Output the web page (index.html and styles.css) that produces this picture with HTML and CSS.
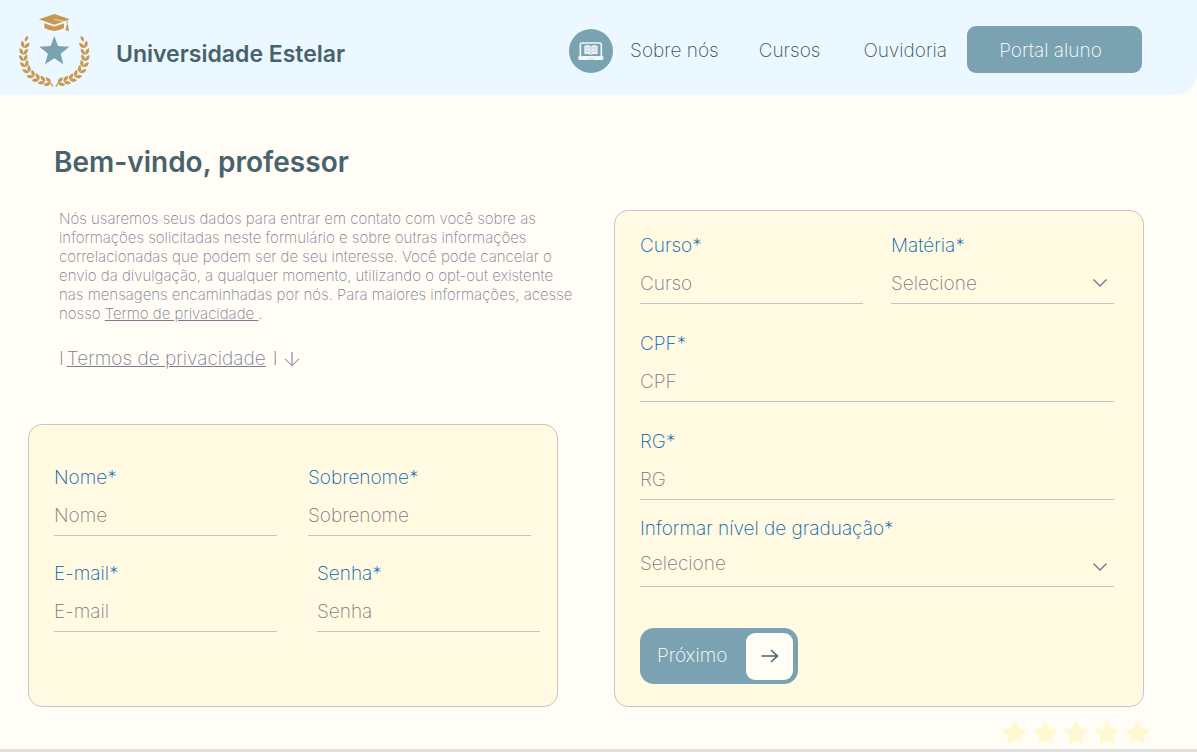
FILE: index.html
```html
<!DOCTYPE html>
<html lang="pt-BR">
<head>
<meta charset="utf-8">
<meta name="viewport" content="width=device-width, initial-scale=1">
<title>Universidade Estelar</title>
<link rel="stylesheet" href="styles.css">
</head>
<body>
<header class="header">
  <svg class="logo" viewBox="0 0 270 270" aria-hidden="true">
    <defs>
      <g id="leaves">
        <path d="M0 3C-11 2-14-7-12-16C-4-13 1-7 0 3Z"/>
        <path d="M0 3C11 2 14-7 12-16C4-13-1-7 0 3Z"/>
      </g>
      <g id="branch">
        <path d="M45 110C42 101 46 95 54 92C56 101 52 107 45 110Z"/>
        <use href="#leaves" transform="translate(43 126) rotate(14)"/>
        <use href="#leaves" transform="translate(40 146) rotate(6)"/>
        <use href="#leaves" transform="translate(41 165) rotate(-6)"/>
        <use href="#leaves" transform="translate(46 183) rotate(-18)"/>
        <use href="#leaves" transform="translate(55 200) rotate(-33)"/>
        <use href="#leaves" transform="translate(69 214) rotate(-48)"/>
        <use href="#leaves" transform="translate(85 223) rotate(-61)"/>
        <use href="#leaves" transform="translate(102 229) rotate(-70)"/>
        <use href="#leaves" transform="translate(119 233) rotate(-74)"/>
        <path d="M117 230Q127 234 130 244L126 245Q124 236 116 233Z"/>
      </g>
    </defs>
    <g fill="#c9984f">
      <use href="#branch"/>
      <use href="#branch" transform="translate(266 0) scale(-1 1)"/>
      <path d="M87 43L133 27L180 43L133 59Z"/>
      <path d="M103 54L133 64L162 54V69Q148 77 133 78Q118 77 103 69Z"/>
      <path d="M170 47H174V59L177 77H167L170 59Z"/>
    </g>
    <path d="M133 43L172 51V60M103 54L133 64L162 54" fill="none" stroke="#ebf8ff" stroke-width="2"/>
    <path fill="#7aa2b1" d="M133 93L144 123L178 125L152 146L160 178L133 160L105 178L114 146L88 125L122 123Z"/>
  </svg>
  <span class="brand">Universidade Estelar</span>
  <nav class="nav">
    <a class="about" href="#">
      <svg class="about-icon" viewBox="0 0 132 132" aria-hidden="true">
        <circle cx="66" cy="66" r="66" fill="#7aa2b1"/>
        <rect x="34" y="42" width="63" height="42" rx="5" fill="none" stroke="#eef7fa" stroke-width="5"/>
        <path d="M28 82H103V89Q103 93 98 93H33Q28 93 28 89Z" fill="#f4fafc"/>
        <path d="M56 90H75" stroke="#a8c3cd" stroke-width="2"/>
        <path d="M46 50Q57 46 66 51Q75 46 86 50V76Q75 73 66 78Q57 73 46 76Z" fill="#e3eff3"/>
        <path d="M66 51V77M51 57H61M71 57H81M51 66H61M71 66H81" stroke="#a8c3cd" stroke-width="2"/>
      </svg>
      <span>Sobre nós</span>
    </a>
    <a class="courses" href="#">Cursos</a>
    <a class="contact" href="#">Ouvidoria</a>
    <button class="portal" type="button">Portal aluno</button>
  </nav>
</header>

<main class="main">
  <section class="intro">
    <h1 class="title">Bem-vindo, professor</h1>
    <p class="text">Nós usaremos seus dados para entrar em contato com você sobre as<br>
      informações solicitadas neste formulário e sobre outras informações<br>
      correlacionadas que podem ser de seu interesse. Você pode cancelar o<br>
      envio da divulgação, a qualquer momento, utilizando o opt-out existente<br>
      nas mensagens encaminhadas por nós. Para maiores informações, acesse<br>
      nosso <a href="#">Termo de privacidade </a>.</p>
    <p class="terms"><span>I</span><a href="#">Termos de privacidade</a><span class="terms-end">I</span>
      <svg class="down" viewBox="0 0 16 16" aria-hidden="true"><path d="M8 1V14M1 8L8 14.500L15 8"/></svg>
    </p>
    <form class="card personal">
      <div class="row row-name">
        <div class="field"><label for="nome">Nome*</label><input id="nome" type="text" placeholder="Nome"></div>
        <div class="field"><label for="sobrenome">Sobrenome*</label><input id="sobrenome" type="text" placeholder="Sobrenome"></div>
      </div>
      <div class="row row-access">
        <div class="field"><label for="email">E-mail*</label><input id="email" type="email" placeholder="E-mail"></div>
        <div class="field"><label for="senha">Senha*</label><input id="senha" type="password" placeholder="Senha"></div>
      </div>
    </form>
  </section>

  <form class="card academic">
    <div class="row row-course">
      <div class="field"><label for="curso">Curso*</label><input id="curso" type="text" placeholder="Curso"></div>
      <div class="field"><label for="materia">Matéria*</label>
        <div class="select"><select id="materia"><option>Selecione</option></select>
          <svg class="chevron" viewBox="0 0 14 8" aria-hidden="true"><path d="M0.500 0.500L7 7L13.500 0.500"/></svg></div>
      </div>
    </div>
    <div class="field"><label for="cpf">CPF*</label><input id="cpf" type="text" placeholder="CPF"></div>
    <div class="field"><label for="rg">RG*</label><input id="rg" type="text" placeholder="RG"></div>
    <div class="field degree"><label for="nivel">Informar nível de graduação*</label>
      <div class="select"><select id="nivel"><option>Selecione</option></select>
        <svg class="chevron" viewBox="0 0 14 8" aria-hidden="true"><path d="M0.500 0.500L7 7L13.500 0.500"/></svg></div>
    </div>
    <button class="next" type="button"><span>Próximo</span>
      <span class="next-icon"><svg viewBox="0 0 18 14" aria-hidden="true"><path d="M0.500 7H16.500M10 1L16.500 7L10 13"/></svg></span>
    </button>
  </form>
</main>

<footer class="footer">
  <svg class="stars" viewBox="0 0 148 25" aria-hidden="true">
    <defs><path id="star" d="M12.500 0.500L16.500 8L25 9.500L19 15.500L20 24L12.500 20.500L5 24L6 15.500L0 9.500L8.500 8Z"/></defs>
    <use href="#star"/><use href="#star" x="31"/><use href="#star" x="61.500"/><use href="#star" x="92.500"/><use href="#star" x="123"/>
  </svg>
</footer>
</body>
</html>
```
FILE: styles.css
```css
* { box-sizing: border-box; }

body {
  margin: 0;
  min-height: 100vh;
  background: #fffdf6;
  color: #7d7d92;
  font-family: Inter, "Liberation Sans", sans-serif;
  font-size: 19px;
  font-weight: 200;
  line-height: 24px;
}

a { color: inherit; }
input, select, button { font: inherit; color: inherit; }

.header {
  display: flex;
  align-items: center;
  height: 95px;
  padding: 0 55px 0 10px;
  background: #ebf8ff;
  border-bottom-right-radius: 22px;
  color: #48636b;
}
.logo { width: 90px; height: 90px; margin-top: 5px; }
.brand { margin: 12px 0 0 16px; font-size: 23px; font-weight: 600; line-height: 28px; }
.nav { display: flex; align-items: center; margin-left: auto; margin-top: 4px; color: #35525b; }
.nav a { padding-top: 2px; text-decoration: none; white-space: nowrap; }
.about { display: flex; align-items: center; gap: 17px; }
.about-icon { width: 44px; height: 44px; }
.courses { margin-left: 40px; }
.contact { margin-left: 43px; }
.portal {
  width: 175px;
  height: 47px;
  margin-left: 20px;
  padding: 2px 8px 0 0;
  border: 0;
  border-radius: 9px;
  background: #7aa2b1;
  color: #ffffff;
}

.main {
  display: grid;
  grid-template-columns: minmax(0, 1fr) minmax(0, 1fr);
  gap: 56px;
  padding: 0 53px 0 28px;
}
.intro { display: flex; flex-direction: column; padding-top: 49px; }
.title { margin: 0 0 29px 26px; color: #48636b; font-size: 28px; font-weight: 600; line-height: 36px; }
.text { margin: 0 0 0 31px; font-size: 15px; line-height: 19px; white-space: nowrap; }
.terms { display: flex; align-items: center; gap: 3px; margin: 24px 0 53px 31px; }
.terms-end { margin: 0 3px 0 4px; }
.down { width: 16px; height: 16px; fill: none; stroke: #75758c; }

.card {
  border: 1px solid #c6c6ca;
  border-radius: 14px;
  background: #fffae1;
}
.personal { flex: 1; display: flex; flex-direction: column; gap: 25px; padding: 40px 17px 20px 25px; }
.academic { display: flex; flex-direction: column; gap: 27px; margin-top: 115px; padding: 22px 29px 22px 25px; }

.row { display: grid; grid-template-columns: 1fr 1fr; }
.row-name { gap: 31px; padding-right: 9px; }
.row-access { gap: 40px; }
.row-course { gap: 28px; }

.field { display: flex; flex-direction: column; gap: 12px; min-width: 0; }
.field label { color: #0062b0; line-height: 26px; }
.field input, .field select {
  display: block;
  width: 100%;
  height: 33px;
  padding: 0 0 8px;
  border: 0;
  border-bottom: 1px solid #c3c3c3;
  border-radius: 0;
  background: transparent;
  outline: none;
  appearance: none;
}
.field input::placeholder { color: #7b7b84; opacity: 1; }
.field select { padding-top: 1px; color: #7b7b84; }
.select { position: relative; }
.chevron {
  position: absolute;
  right: 7px;
  top: 8px;
  width: 14px;
  height: 8px;
  fill: none;
  stroke: #75758c;
  stroke-width: 1.300;
  pointer-events: none;
}
.degree { gap: 9px; margin-top: -11px; }
.degree select { height: 36px; padding-bottom: 11px; }
.degree .chevron { top: 12px; }

.next {
  display: flex;
  align-items: center;
  justify-content: space-between;
  align-self: flex-start;
  width: 158px;
  height: 56px;
  margin-top: 14px;
  padding: 0 5px 0 17px;
  border: 0;
  border-radius: 14px;
  background: #7aa2b1;
  color: #ffffff;
}
.next-icon {
  display: grid;
  place-items: center;
  width: 47px;
  height: 47px;
  border-radius: 9px;
  background: #fffdf6;
}
.next-icon svg { width: 18px; height: 14px; fill: none; stroke: #48636b; stroke-width: 1.500; }

.footer {
  display: flex;
  justify-content: flex-end;
  padding: 13px 47px 4px;
  border-bottom: 3px solid #e0e0e0;
}
.stars { width: 148px; height: 25px; fill: #fff9d2; }
```
